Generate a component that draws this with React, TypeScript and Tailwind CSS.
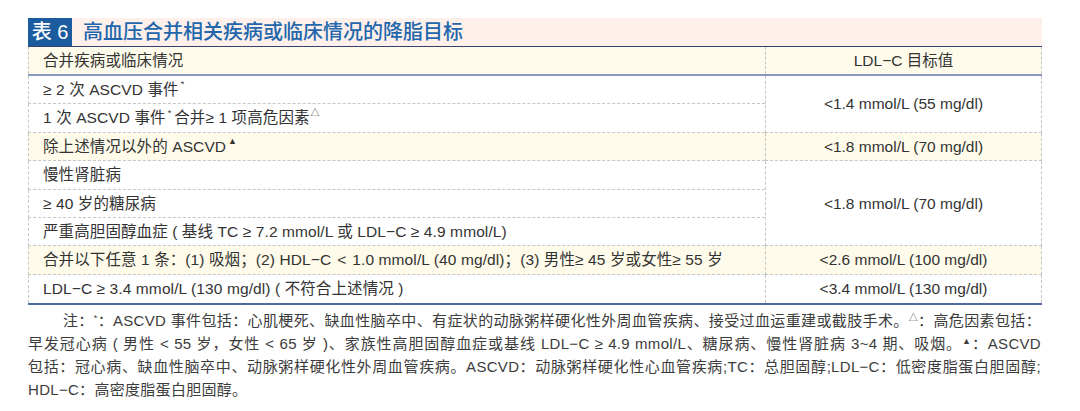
import React from "react";

const F = "font-['Liberation_Sans','Noto_Sans_CJK_SC',sans-serif]";

function Sup({ c, cls = "" }: { c: string; cls?: string }) {
  return (
    <span className={`relative -top-[5px] text-[9px] leading-none ${cls}`}>{c}</span>
  );
}

const L =
  "flex items-center pl-[14px] border-l border-b border-dashed border-[#c6c6c6] tracking-[0.1px] whitespace-nowrap";
const R =
  "flex items-center justify-center border-x border-b border-dashed border-[#c6c6c6] whitespace-nowrap";

export default function App() {
  return (
    <div className={`w-[1080px] h-[411px] bg-white ${F} text-[#333] pt-[18px] pl-[28px]`}>
      <div className="w-[1014px]">
        {/* title bar */}
        <div className="flex h-[29px] bg-[#fdf0eb] border-b border-[#34426f]">
          <div className="w-[44px] bg-[#1b5c9e] text-white text-[20px] font-medium flex items-center justify-center leading-none">
            表 6
          </div>
          <div className="ml-[11px] text-[20px] font-medium text-[#2266ab] flex items-center leading-none">
            高血压合并相关疾病或临床情况的降脂目标
          </div>
        </div>
        {/* header */}
        <div className="grid grid-cols-[737px_277px] h-[27px] bg-[#fffbea] text-[15.5px]">
          <div className="flex items-center pl-[14px] border-l border-dashed border-[#c6c6c6] tracking-[0.1px]">
            合并疾病或临床情况
          </div>
          <div className="flex items-center justify-center border-x border-dashed border-[#c6c6c6]">
            LDL−C 目标值
          </div>
        </div>
        <div className="h-[2px] bg-[#8797bd]" />
        {/* body */}
        <div className="grid grid-cols-[737px_277px] auto-rows-[28.4px] text-[15.5px]">
          <div className={L}>
            ≥ 2 次 ASCVD 事件 <Sup c="*" cls="ml-[2px]" />
          </div>
          <div className={`${R} row-span-2`}>&lt;1.4 mmol/L (55 mg/dl)</div>
          <div className={L}>
            1 次 ASCVD 事件 <Sup c="*" cls="ml-[2px] mr-[3px]" />合并≥ 1 项高危因素<Sup c="△" cls="ml-[1px]" />
          </div>
          <div className={`${L} bg-[#fffbea]`}>
            除上述情况以外的 ASCVD <Sup c="▲" cls="ml-[2px]" />
          </div>
          <div className={`${R} bg-[#fffbea]`}>&lt;1.8 mmol/L (70 mg/dl)</div>
          <div className={L}>慢性肾脏病</div>
          <div className={`${R} row-span-3`}>&lt;1.8 mmol/L (70 mg/dl)</div>
          <div className={L}>≥ 40 岁的糖尿病</div>
          <div className={L}>严重高胆固醇血症 ( 基线 TC ≥ 7.2 mmol/L 或 LDL−C ≥ 4.9 mmol/L)</div>
          <div className={`${L} bg-[#fffbea]`}>
            合并以下任意 1 条：(1) 吸烟；(2) HDL−C<span className="mx-[6px]">&lt;</span>1.0 mmol/L (40 mg/dl)；(3) 男性≥ 45 岁或女性≥ 55 岁
          </div>
          <div className={`${R} bg-[#fffbea]`}>&lt;2.6 mmol/L (100 mg/dl)</div>
          <div className="flex items-center pl-[14px] border-l border-dashed border-[#c6c6c6] tracking-[0.1px] whitespace-nowrap">
            LDL−C ≥ 3.4 mmol/L (130 mg/dl) ( 不符合上述情况 )
          </div>
          <div className="flex items-center justify-center border-x border-dashed border-[#c6c6c6]">
            &lt;3.4 mmol/L (130 mg/dl)
          </div>
        </div>
        <div className="h-[2px] bg-[#4f69a5]" />
        {/* footnote */}
        <div className="mt-[4px] text-[15px] leading-[23px] text-[#3c3c3c] tracking-[0.3px] w-[1013px]">
          <div className="pl-[35px] text-justify [text-align-last:justify]">
            注：<Sup c="*" />：ASCVD 事件包括：心肌梗死、缺血性脑卒中、有症状的动脉粥样硬化性外周血管疾病、接受过血运重建或截肢手术。<Sup c="△" />：高危因素包括：
          </div>
          <div className="text-justify [text-align-last:justify]">
            早发冠心病 ( 男性 &lt; 55 岁，女性 &lt; 65 岁 )、家族性高胆固醇血症或基线 LDL−C ≥ 4.9 mmol/L、糖尿病、慢性肾脏病 3~4 期、吸烟。<Sup c="▲" />：ASCVD
          </div>
          <div className="text-justify [text-align-last:justify]">
            包括：冠心病、缺血性脑卒中、动脉粥样硬化性外周血管疾病。ASCVD：动脉粥样硬化性心血管疾病;TC：总胆固醇;LDL−C：低密度脂蛋白胆固醇;
          </div>
          <div>HDL−C：高密度脂蛋白胆固醇。</div>
        </div>
      </div>
    </div>
  );
}
